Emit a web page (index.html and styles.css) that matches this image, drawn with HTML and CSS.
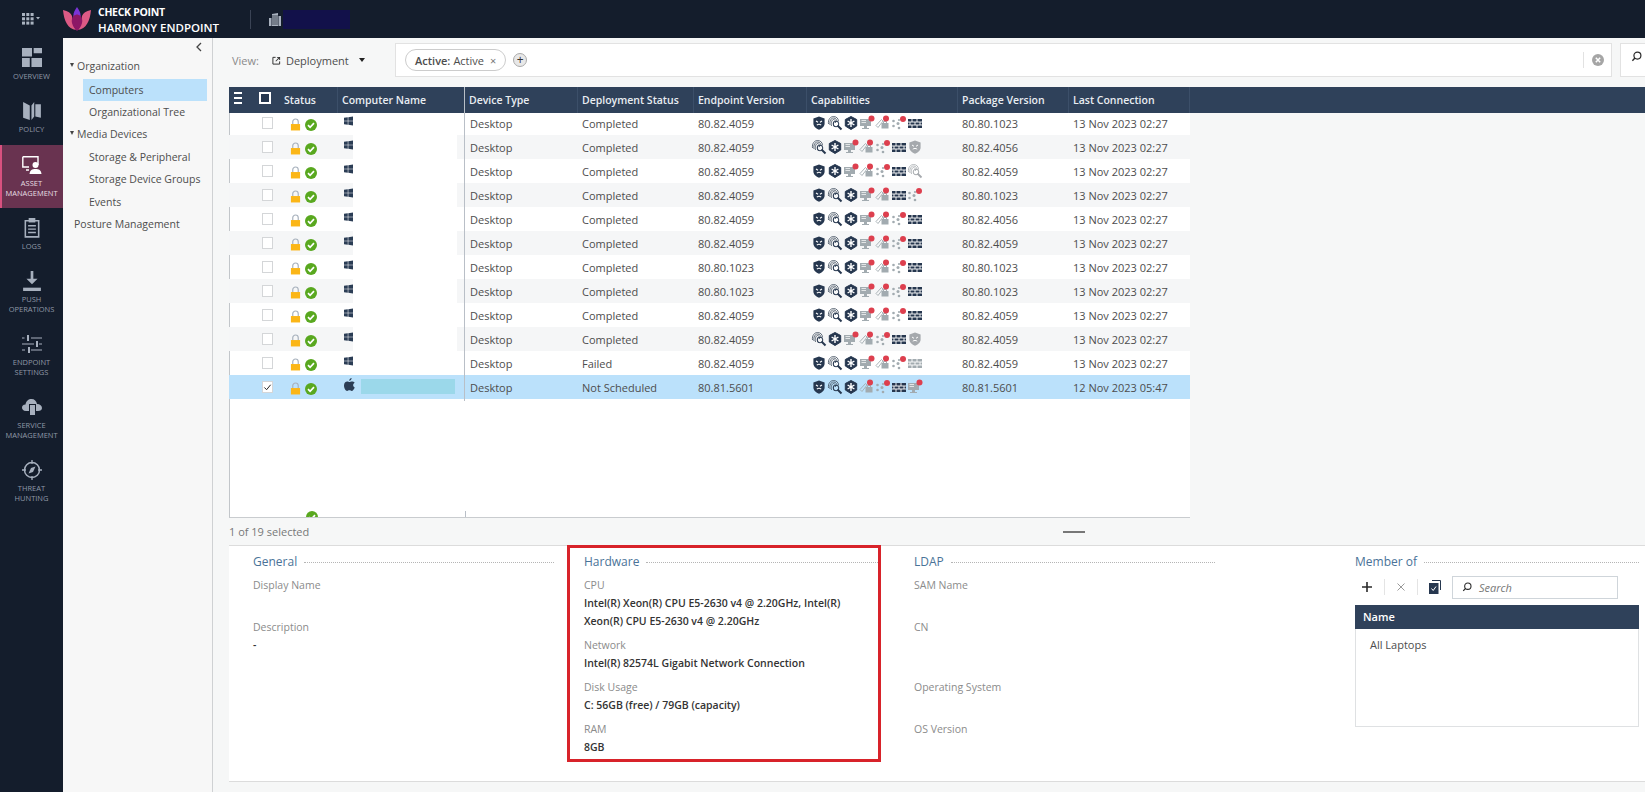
FILE: index.html
```html
<!DOCTYPE html>
<html lang="en">
<head>
    <meta charset="UTF-8">
    <title>Harmony Endpoint</title>
    <link rel="stylesheet" href="styles.css">
</head>
<body>
    <!-- shared icons -->
    <svg class="sprite" xmlns="http://www.w3.org/2000/svg">
        <symbol id="i-win" viewBox="0 0 10 10"><path d="M0 1.4 4.2.8v3.9H0zM4.8.7 10 0v4.7H4.8zM0 5.3h4.2v3.9L0 8.6zM4.8 5.3H10V10l-5.2-.7z"/></symbol>
        <symbol id="i-apple" viewBox="0 0 12 14"><path d="M8.3 0c.1 1.5-1.1 3-2.6 2.9C5.6 1.500 6.900.1 8.300 0zM11.700 10.200c-.7 1.700-2 3.800-3.300 3.800-1 0-1.300-.6-2.500-.6s-1.500.6-2.500.6C1.900 14 0 10.900 0 8c0-2.700 1.700-4.300 3.500-4.300 1.100 0 2 .7 2.500.7s1.600-.8 2.900-.7c.6 0 2 .2 2.700 1.400-2.300 1.500-2 4.200.1 5.100z"/></symbol>
        <symbol id="i-lock" viewBox="0 0 12 14"><path d="M3 7V4a3 3 0 0 1 6 0v3" fill="none" stroke="#a8b2bd" stroke-width="1.300"/><rect x="1" y="6.500" width="10" height="7" fill="#fbb617"/></symbol>
        <symbol id="i-ok" viewBox="0 0 12 12"><circle cx="6" cy="6" r="6" fill="#59a81f"/><path d="M3 6.200 5.100 8.300 9 4.200" fill="none" stroke="#fff" stroke-width="1.700"/></symbol>
        <symbol id="c-shield" viewBox="0 0 16 16"><path d="M8 1.500 13.600 3.500V8.500C13.600 11.500 11 13.500 8 14.700 5 13.500 2.400 11.500 2.400 8.500V3.500z" fill="#26374f"/><path d="M5 6 7 7.300M11 6 9 7.300M5.800 10.200C7 9.200 9 9.200 10.200 10.200" fill="none" stroke="#fff" stroke-width="1.100"/></symbol>
        <symbol id="c-shield-off" viewBox="0 0 16 16"><path d="M8 1.500 13.600 3.500V8.500C13.600 11.500 11 13.500 8 14.700 5 13.500 2.400 11.500 2.400 8.500V3.500z" fill="#a5a9ad"/><path d="M5 6 7 7.300M11 6 9 7.300M5.800 10.200C7 9.200 9 9.200 10.200 10.200" fill="none" stroke="#fff" stroke-width="1"/></symbol>
        <symbol id="c-print" viewBox="0 0 16 16"><g fill="none" stroke="#3e4b5c" stroke-width=".8"><path d="M1.500 9C.8 4.500 3.500 1.500 6.500 1.500S11.500 3.500 11.500 6.500"/><path d="M3 10C2.300 6 4 3 6.500 3S10 5 10 7"/><path d="M4.500 11C3.800 7.500 5 4.500 6.500 4.500S8.500 6 8.500 8"/><path d="M6.500 6.500C6.200 8.500 6.500 10.500 7.500 12"/></g><path d="M10.500 10.500 14.500 14.500" stroke="#26374f" stroke-width="2"/><circle cx="9" cy="9" r="2.800" fill="none" stroke="#26374f"/></symbol>
        <symbol id="c-print-off" viewBox="0 0 16 16"><g fill="none" stroke="#a5a9ad" stroke-width=".8"><path d="M1.500 9C.8 4.500 3.500 1.500 6.500 1.500S11.500 3.500 11.500 6.500"/><path d="M3 10C2.300 6 4 3 6.500 3S10 5 10 7"/><path d="M4.500 11C3.800 7.500 5 4.500 6.500 4.500S8.500 6 8.500 8"/></g><path d="M10.500 10.500 14.500 14.500" stroke="#a5a9ad" stroke-width="1.800"/><circle cx="9" cy="9" r="2.800" fill="none" stroke="#a5a9ad"/></symbol>
        <symbol id="c-hex" viewBox="0 0 16 16"><path d="M8 1.500 13.700 4.500V11L8 14.500 2.300 11V4.500z" fill="#26374f" stroke="#26374f" stroke-linejoin="round"/><path d="M8 4V12M4.600 6 11.400 10M11.400 6 4.600 10" stroke="#fff" stroke-width="1.400"/></symbol>
        <symbol id="c-screen" viewBox="0 0 16 16"><path d="M1 4H12V11H1zM5 11H8V13H10V14H3V13H5z" fill="#a2abb0"/><path d="M2.500 5.500H7M2.500 7.500H7" stroke="#fff" stroke-width=".7"/><circle cx="12.500" cy="3.500" r="3" fill="#dd3f4e"/></symbol>
        <symbol id="c-key" viewBox="0 0 16 16"><path d="M1 10.500 6.500 4.500 8 6 3 12.500z" fill="none" stroke="#a2abb0" stroke-width=".9"/><rect x="6.500" y="8" width="7" height="5.500" fill="#a2abb0"/><path d="M8.500 8V6.500h3V8" fill="none" stroke="#a2abb0"/><circle cx="11" cy="3.500" r="3" fill="#dd3f4e"/></symbol>
        <symbol id="c-nodes" viewBox="0 0 16 16"><g fill="#a2abb0"><circle cx="2.500" cy="6" r="1.300"/><circle cx="2.500" cy="11" r="1.300"/><circle cx="7" cy="8.500" r="1.500"/><circle cx="8" cy="13" r="1.300"/><circle cx="8" cy="5" r="1.100"/></g><circle cx="12" cy="4" r="3" fill="#dd3f4e"/></symbol>
        <symbol id="c-wall" viewBox="0 0 16 16"><path d="M1 4H15V13H1z" fill="#26374f"/><path d="M1 7H15M1 10H15M5 4V7M10 4V7M3 7V10M8 7V10M13 7V10M5 10V13M10 10V13" stroke="#fff" stroke-width=".9"/></symbol>
        <symbol id="c-wall-off" viewBox="0 0 16 16"><path d="M1 4H15V13H1z" fill="#a2abb0"/><path d="M1 7H15M1 10H15M5 4V7M10 4V7M3 7V10M8 7V10M13 7V10M5 10V13M10 10V13" stroke="#fff" stroke-width=".9"/></symbol>
    </svg>

    <!-- top bar -->
    <header class="topbar">
        <svg class="apps" viewBox="0 0 18 12"><g fill="#aab3c0"><rect width="3" height="3"/><rect x="4.300" width="3" height="3"/><rect x="8.600" width="3" height="3"/><rect y="4.300" width="3" height="3"/><rect x="4.300" y="4.300" width="3" height="3"/><rect x="8.600" y="4.300" width="3" height="3"/><rect y="8.600" width="3" height="3"/><rect x="4.300" y="8.600" width="3" height="3"/><rect x="8.600" y="8.600" width="3" height="3"/><path d="M14 4h4l-2 2.500z"/></g></svg>
        <svg class="logo" viewBox="0 0 28 24">
            <path d="M0 3C5 4 8 6 9 9 9 14 10 18 13 23 5 22 1 14 0 3z" fill="#dc5a85"/>
            <path d="M28 3C23 4 20 6 19 9 19 14 18 18 15 23 23 22 27 14 28 3z" fill="#dc5a85"/>
            <path d="M14 4C18 8 20 12 19 16 18 20 16 22 14 24 12 22 10 20 9 16 8 12 10 8 14 4z" fill="#8c1766"/>
            <path d="M14 0C16 3 18 6 17.500 9 16 8 15 7.500 14 7.500S12 8 10.500 9C10 6 12 3 14 0z" fill="#7b35d6"/>
        </svg>
        <div class="brand">
            <div class="brand-top">CHECK POINT</div>
            <div class="brand-name">HARMONY ENDPOINT</div>
        </div>
        <span class="top-divider"></span>
        <svg class="building" viewBox="0 0 12 13"><path d="M3 1 9 0V13H3zM0 5H2.500V13H0zM9.500 3H12V13H9.500z" fill="#a8b1be"/><path d="M3 3H9M3 5H9M3 7H9M3 9H9M3 11H9" stroke="#141d2c" stroke-width=".7"/></svg>
        <span class="tenant"></span>
    </header>

    <div class="layout">
        <!-- main navigation -->
        <nav class="sidenav">
            <a class="nav-item">
                <svg class="nav-icon" viewBox="0 0 18 18"><path d="M0 0H9V8H0zM10.500 0H18V5H10.500zM0 9.500H7V18H0zM8.500 9.500H18V18H8.500z" fill="#a7b0be" transform="scale(1 .95)"/></svg>
                <span>Overview</span>
            </a>
            <a class="nav-item">
                <svg class="nav-icon" viewBox="0 0 18 18"><path d="M1 1 7 4V17L1 15zM8.500 4 11 1V14L8.500 17zM12 3H17V15L12 14z" fill="#a7b0be"/></svg>
                <span>Policy</span>
            </a>
            <a class="nav-item active">
                <svg class="nav-icon" viewBox="0 0 20 18"><path d="M.8.800H16V9" fill="none" stroke="#fff" stroke-width="1.400"/><path d="M.8.800V11H7M4 14H7" fill="none" stroke="#fff" stroke-width="1.400"/><circle cx="13.500" cy="9" r="3" fill="#fff"/><path d="M7.500 18C8 14 10 13 13.500 13S19 14 19.500 18z" fill="#fff"/></svg>
                <span>Asset<br>Management</span>
            </a>
            <a class="nav-item">
                <svg class="nav-icon" viewBox="0 0 16 18"><path d="M2 2.500H14V17H2z" fill="none" stroke="#a7b0be" stroke-width="1.400"/><rect x="5" y="0" width="6" height="4" fill="#a7b0be"/><path d="M4.500 7H11.500M4.500 10H11.500M4.500 13H11.500" stroke="#a7b0be" stroke-width="1.300"/></svg>
                <span>Logs</span>
            </a>
            <a class="nav-item">
                <svg class="nav-icon" viewBox="0 0 18 18"><path d="M7.800 0H10.200V7H14L9 12 4 7H7.800z" fill="#a7b0be"/><path d="M1 15H17V18H1z" fill="#a7b0be"/></svg>
                <span>Push<br>Operations</span>
            </a>
            <a class="nav-item">
                <svg class="nav-icon" viewBox="0 0 20 18"><g stroke="#a7b0be" stroke-width="1.200"><path d="M0 3H2.500M9 3H20M0 9H12M17 9H20M0 15H3M9 15H20"/></g><g fill="#a7b0be"><rect x="5" y="0" width="2" height="6"/><rect x="14" y="6" width="2" height="6"/><rect x="6" y="12" width="2" height="6"/></g></svg>
                <span>Endpoint<br>Settings</span>
            </a>
            <a class="nav-item">
                <svg class="nav-icon" viewBox="0 0 20 18"><path d="M4 13C1 13 0 11 0 9.500S1 6.500 3.500 6.500C4 3 6.500 1 9.500 1S14.500 3 15 6C18 6 20 8 20 10S18.500 13 16 13z" fill="#a7b0be"/><rect x="7" y="6" width="7" height="12" fill="#141d2c"/><rect x="8" y="7" width="5" height="10" fill="#a7b0be"/></svg>
                <span>Service<br>Management</span>
            </a>
            <a class="nav-item">
                <svg class="nav-icon" viewBox="0 0 20 20"><circle cx="10" cy="10" r="7.500" fill="none" stroke="#a7b0be" stroke-width="1.500"/><path d="M10 0V4M10 16V20M0 10H4M16 10H20" stroke="#a7b0be" stroke-width="1.300"/><path d="M13.500 6.500 11 12 6.500 13.500 9 8z" fill="#a7b0be"/></svg>
                <span>Threat<br>Hunting</span>
            </a>
        </nav>

        <!-- tree panel -->
        <aside class="tree">
            <svg class="collapse" viewBox="0 0 6 10"><path d="M5 1 1 5 5 9" fill="none" stroke="#444" stroke-width="1.300"/></svg>
            <div class="tree-group"><i class="arrow"></i>Organization</div>
            <div class="tree-row selected">Computers</div>
            <div class="tree-row">Organizational Tree</div>
            <div class="tree-group"><i class="arrow"></i>Media Devices</div>
            <div class="tree-row">Storage &amp; Peripheral</div>
            <div class="tree-row">Storage Device Groups</div>
            <div class="tree-row">Events</div>
            <div class="tree-top">Posture Management</div>
        </aside>

        <main class="content">
            <div class="toolbar">
                <span class="view-label">View:</span>
                <svg class="view-icon" viewBox="0 0 10 10"><path d="M4 1.500H1V9H8.500V6" fill="none" stroke="#333" stroke-width="1.100"/><path d="M5.500 1H9V4.500H8V2.700L4.500 6.200 3.800 5.500 7.300 2H5.500z" fill="#333"/></svg>
                <span class="view-name">Deployment</span>
                <i class="caret"></i>
                <div class="filter-bar">
                    <span class="chip"><b>Active:</b> Active <em>×</em></span>
                    <span class="chip-add">+</span>
                    <span class="filter-clear">
                        <svg class="clear-icon" viewBox="0 0 12 12"><circle cx="6" cy="6" r="6" fill="#a5a5a5"/><path d="M3.800 3.800 8.200 8.200M8.200 3.800 3.800 8.200" stroke="#fff" stroke-width="1.500"/></svg>
                    </span>
                </div>
                <div class="search-btn">
                    <svg class="search-icon" viewBox="0 0 12 12"><circle cx="7" cy="5" r="3.800" fill="none" stroke="#2a2a2a" stroke-width="1.300"/><path d="M4.300 7.700 1.500 10.700" stroke="#2a2a2a" stroke-width="1.500"/></svg>
                </div>
            </div>

            <div class="grid">
                <div class="grid-head">
                    <div class="th th-tools">
                        <span class="menu-bars"><i></i><i></i><i></i></span>
                        <span class="head-check"></span>
                    </div>
                    <div class="th">Status</div>
                    <div class="th sep">Computer Name</div>
                    <div class="th sep-strong">Device Type</div>
                    <div class="th sep">Deployment Status</div>
                    <div class="th sep">Endpoint Version</div>
                    <div class="th sep">Capabilities</div>
                    <div class="th sep">Package Version</div>
                    <div class="th sep">Last Connection</div>
                    <div class="th sep"></div>
                </div>
                <div class="grid-body">
                    <div class="row">
                        <div class="td"><span class="check"></span></div>
                        <div class="td status"><svg class="lock"><use href="#i-lock"/></svg><svg class="ok"><use href="#i-ok"/></svg></div>
                        <div class="td name"><svg class="os"><use href="#i-win"/></svg><span class="redact"></span></div>
                        <div class="td device">Desktop</div>
                        <div class="td">Completed</div>
                        <div class="td">80.82.4059</div>
                        <div class="td caps"><svg><use href="#c-shield"/></svg><svg><use href="#c-print"/></svg><svg><use href="#c-hex"/></svg><svg><use href="#c-screen"/></svg><svg><use href="#c-key"/></svg><svg><use href="#c-nodes"/></svg><svg><use href="#c-wall"/></svg></div>
                        <div class="td">80.80.1023</div>
                        <div class="td">13 Nov 2023 02:27</div>
                    </div>
                    <div class="row">
                        <div class="td"><span class="check"></span></div>
                        <div class="td status"><svg class="lock"><use href="#i-lock"/></svg><svg class="ok"><use href="#i-ok"/></svg></div>
                        <div class="td name"><svg class="os"><use href="#i-win"/></svg><span class="redact"></span></div>
                        <div class="td device">Desktop</div>
                        <div class="td">Completed</div>
                        <div class="td">80.82.4059</div>
                        <div class="td caps"><svg><use href="#c-print"/></svg><svg><use href="#c-hex"/></svg><svg><use href="#c-screen"/></svg><svg><use href="#c-key"/></svg><svg><use href="#c-nodes"/></svg><svg><use href="#c-wall"/></svg><svg><use href="#c-shield-off"/></svg></div>
                        <div class="td">80.82.4056</div>
                        <div class="td">13 Nov 2023 02:27</div>
                    </div>
                    <div class="row">
                        <div class="td"><span class="check"></span></div>
                        <div class="td status"><svg class="lock"><use href="#i-lock"/></svg><svg class="ok"><use href="#i-ok"/></svg></div>
                        <div class="td name"><svg class="os"><use href="#i-win"/></svg><span class="redact"></span></div>
                        <div class="td device">Desktop</div>
                        <div class="td">Completed</div>
                        <div class="td">80.82.4059</div>
                        <div class="td caps"><svg><use href="#c-shield"/></svg><svg><use href="#c-hex"/></svg><svg><use href="#c-screen"/></svg><svg><use href="#c-key"/></svg><svg><use href="#c-nodes"/></svg><svg><use href="#c-wall"/></svg><svg><use href="#c-print-off"/></svg></div>
                        <div class="td">80.82.4059</div>
                        <div class="td">13 Nov 2023 02:27</div>
                    </div>
                    <div class="row">
                        <div class="td"><span class="check"></span></div>
                        <div class="td status"><svg class="lock"><use href="#i-lock"/></svg><svg class="ok"><use href="#i-ok"/></svg></div>
                        <div class="td name"><svg class="os"><use href="#i-win"/></svg><span class="redact"></span></div>
                        <div class="td device">Desktop</div>
                        <div class="td">Completed</div>
                        <div class="td">80.82.4059</div>
                        <div class="td caps"><svg><use href="#c-shield"/></svg><svg><use href="#c-print"/></svg><svg><use href="#c-hex"/></svg><svg><use href="#c-screen"/></svg><svg><use href="#c-key"/></svg><svg><use href="#c-wall"/></svg><svg><use href="#c-nodes"/></svg></div>
                        <div class="td">80.80.1023</div>
                        <div class="td">13 Nov 2023 02:27</div>
                    </div>
                    <div class="row">
                        <div class="td"><span class="check"></span></div>
                        <div class="td status"><svg class="lock"><use href="#i-lock"/></svg><svg class="ok"><use href="#i-ok"/></svg></div>
                        <div class="td name"><svg class="os"><use href="#i-win"/></svg><span class="redact"></span></div>
                        <div class="td device">Desktop</div>
                        <div class="td">Completed</div>
                        <div class="td">80.82.4059</div>
                        <div class="td caps"><svg><use href="#c-shield"/></svg><svg><use href="#c-print"/></svg><svg><use href="#c-hex"/></svg><svg><use href="#c-screen"/></svg><svg><use href="#c-key"/></svg><svg><use href="#c-nodes"/></svg><svg><use href="#c-wall"/></svg></div>
                        <div class="td">80.82.4056</div>
                        <div class="td">13 Nov 2023 02:27</div>
                    </div>
                    <div class="row">
                        <div class="td"><span class="check"></span></div>
                        <div class="td status"><svg class="lock"><use href="#i-lock"/></svg><svg class="ok"><use href="#i-ok"/></svg></div>
                        <div class="td name"><svg class="os"><use href="#i-win"/></svg><span class="redact"></span></div>
                        <div class="td device">Desktop</div>
                        <div class="td">Completed</div>
                        <div class="td">80.82.4059</div>
                        <div class="td caps"><svg><use href="#c-shield"/></svg><svg><use href="#c-print"/></svg><svg><use href="#c-hex"/></svg><svg><use href="#c-screen"/></svg><svg><use href="#c-key"/></svg><svg><use href="#c-nodes"/></svg><svg><use href="#c-wall"/></svg></div>
                        <div class="td">80.82.4059</div>
                        <div class="td">13 Nov 2023 02:27</div>
                    </div>
                    <div class="row">
                        <div class="td"><span class="check"></span></div>
                        <div class="td status"><svg class="lock"><use href="#i-lock"/></svg><svg class="ok"><use href="#i-ok"/></svg></div>
                        <div class="td name"><svg class="os"><use href="#i-win"/></svg><span class="redact"></span></div>
                        <div class="td device">Desktop</div>
                        <div class="td">Completed</div>
                        <div class="td">80.80.1023</div>
                        <div class="td caps"><svg><use href="#c-shield"/></svg><svg><use href="#c-print"/></svg><svg><use href="#c-hex"/></svg><svg><use href="#c-screen"/></svg><svg><use href="#c-key"/></svg><svg><use href="#c-nodes"/></svg><svg><use href="#c-wall"/></svg></div>
                        <div class="td">80.80.1023</div>
                        <div class="td">13 Nov 2023 02:27</div>
                    </div>
                    <div class="row">
                        <div class="td"><span class="check"></span></div>
                        <div class="td status"><svg class="lock"><use href="#i-lock"/></svg><svg class="ok"><use href="#i-ok"/></svg></div>
                        <div class="td name"><svg class="os"><use href="#i-win"/></svg><span class="redact"></span></div>
                        <div class="td device">Desktop</div>
                        <div class="td">Completed</div>
                        <div class="td">80.80.1023</div>
                        <div class="td caps"><svg><use href="#c-shield"/></svg><svg><use href="#c-print"/></svg><svg><use href="#c-hex"/></svg><svg><use href="#c-screen"/></svg><svg><use href="#c-key"/></svg><svg><use href="#c-nodes"/></svg><svg><use href="#c-wall"/></svg></div>
                        <div class="td">80.80.1023</div>
                        <div class="td">13 Nov 2023 02:27</div>
                    </div>
                    <div class="row">
                        <div class="td"><span class="check"></span></div>
                        <div class="td status"><svg class="lock"><use href="#i-lock"/></svg><svg class="ok"><use href="#i-ok"/></svg></div>
                        <div class="td name"><svg class="os"><use href="#i-win"/></svg><span class="redact"></span></div>
                        <div class="td device">Desktop</div>
                        <div class="td">Completed</div>
                        <div class="td">80.82.4059</div>
                        <div class="td caps"><svg><use href="#c-shield"/></svg><svg><use href="#c-print"/></svg><svg><use href="#c-hex"/></svg><svg><use href="#c-screen"/></svg><svg><use href="#c-key"/></svg><svg><use href="#c-nodes"/></svg><svg><use href="#c-wall"/></svg></div>
                        <div class="td">80.82.4059</div>
                        <div class="td">13 Nov 2023 02:27</div>
                    </div>
                    <div class="row">
                        <div class="td"><span class="check"></span></div>
                        <div class="td status"><svg class="lock"><use href="#i-lock"/></svg><svg class="ok"><use href="#i-ok"/></svg></div>
                        <div class="td name"><svg class="os"><use href="#i-win"/></svg><span class="redact"></span></div>
                        <div class="td device">Desktop</div>
                        <div class="td">Completed</div>
                        <div class="td">80.82.4059</div>
                        <div class="td caps"><svg><use href="#c-print"/></svg><svg><use href="#c-hex"/></svg><svg><use href="#c-screen"/></svg><svg><use href="#c-key"/></svg><svg><use href="#c-nodes"/></svg><svg><use href="#c-wall"/></svg><svg><use href="#c-shield-off"/></svg></div>
                        <div class="td">80.82.4059</div>
                        <div class="td">13 Nov 2023 02:27</div>
                    </div>
                    <div class="row">
                        <div class="td"><span class="check"></span></div>
                        <div class="td status"><svg class="lock"><use href="#i-lock"/></svg><svg class="ok"><use href="#i-ok"/></svg></div>
                        <div class="td name"><svg class="os"><use href="#i-win"/></svg><span class="redact"></span></div>
                        <div class="td device">Desktop</div>
                        <div class="td">Failed</div>
                        <div class="td">80.82.4059</div>
                        <div class="td caps"><svg><use href="#c-shield"/></svg><svg><use href="#c-print"/></svg><svg><use href="#c-hex"/></svg><svg><use href="#c-screen"/></svg><svg><use href="#c-key"/></svg><svg><use href="#c-nodes"/></svg><svg><use href="#c-wall-off"/></svg></div>
                        <div class="td">80.82.4059</div>
                        <div class="td">13 Nov 2023 02:27</div>
                    </div>
                    <div class="row picked">
                        <div class="td"><span class="check on">
                            <svg viewBox="0 0 10 10"><path d="M1.500 5.500 4 8 8.500 2.500" fill="none" stroke="#222" stroke-width="1.100"/></svg>
                        </span></div>
                        <div class="td status"><svg class="lock"><use href="#i-lock"/></svg><svg class="ok"><use href="#i-ok"/></svg></div>
                        <div class="td name"><svg class="os"><use href="#i-apple"/></svg><span class="redact"></span></div>
                        <div class="td device">Desktop</div>
                        <div class="td">Not Scheduled</div>
                        <div class="td">80.81.5601</div>
                        <div class="td caps"><svg><use href="#c-shield"/></svg><svg><use href="#c-print"/></svg><svg><use href="#c-hex"/></svg><svg><use href="#c-key"/></svg><svg><use href="#c-nodes"/></svg><svg><use href="#c-wall"/></svg><svg><use href="#c-screen"/></svg></div>
                        <div class="td">80.81.5601</div>
                        <div class="td">12 Nov 2023 05:47</div>
                    </div>
                    <div class="row-peek">
                        <svg class="ok"><use href="#i-ok"/></svg>
                        <span class="peek-line"></span>
                    </div>
                </div>
            </div>

            <div class="grid-foot">
                <span>1 of 19 selected</span>
                <i class="drag-handle"></i>
            </div>

            <!-- details of the selected computer -->
            <section class="details">
                <div class="col col-general">
                    <h3 class="col-title"><span>General</span></h3>
                    <div class="field"><label>Display Name</label><p></p></div>
                    <div class="field"><label>Description</label><p>-</p></div>
                </div>
                <div class="col col-hardware">
                    <h3 class="col-title"><span>Hardware</span></h3>
                    <div class="field"><label>CPU</label><p>Intel(R) Xeon(R) CPU E5-2630 v4 @ 2.20GHz, Intel(R)<br>Xeon(R) CPU E5-2630 v4 @ 2.20GHz</p></div>
                    <div class="field"><label>Network</label><p>Intel(R) 82574L Gigabit Network Connection</p></div>
                    <div class="field"><label>Disk Usage</label><p>C: 56GB (free) / 79GB (capacity)</p></div>
                    <div class="field"><label>RAM</label><p>8GB</p></div>
                </div>
                <div class="col col-ldap">
                    <h3 class="col-title"><span>LDAP</span></h3>
                    <div class="field"><label>SAM Name</label><p></p></div>
                    <div class="field"><label>CN</label><p class="tall"></p></div>
                    <div class="field"><label>Operating System</label><p></p></div>
                    <div class="field"><label>OS Version</label><p></p></div>
                </div>
                <div class="col col-member">
                    <h3 class="col-title"><span>Member of</span></h3>
                    <div class="member-tools">
                        <svg class="tool-add" viewBox="0 0 10 10"><path d="M5 0V10M0 5H10" stroke="#2a2a2a" stroke-width="1.600"/></svg>
                        <i class="tool-sep"></i>
                        <svg class="tool-del" viewBox="0 0 8 8"><path d="M.5.5 7.500 7.500M7.500.5 .5 7.500" stroke="#999" stroke-width="1"/></svg>
                        <i class="tool-sep"></i>
                        <svg class="tool-copy" viewBox="0 0 12 14"><path d="M3 .5H11.500V10" fill="none" stroke="#26374f"/><rect x="0" y="3" width="9.500" height="11" fill="#26374f"/><path d="M2.500 8.500 4.200 10.500 7 6.500" fill="none" stroke="#fff"/></svg>
                        <div class="member-search">
                            <svg viewBox="0 0 12 12"><circle cx="7" cy="5" r="3.800" fill="none" stroke="#2a2a2a" stroke-width="1.300"/><path d="M4.300 7.700 1.500 10.700" stroke="#2a2a2a" stroke-width="1.500"/></svg>
                            <span>Search</span>
                        </div>
                    </div>
                    <div class="member-table">
                        <div class="member-head">Name</div>
                        <div class="member-row">All Laptops</div>
                    </div>
                </div>
            </section>
        </main>
    </div>
</body>
</html>
```

FILE: styles.css
```css
* {
    box-sizing: border-box;
}

html, body {
    height: 100%;
}

body {
    margin: 0;
    overflow: hidden;
    font-family: "Open Sans", "Liberation Sans", sans-serif;
    font-size: 11px;
    color: #4d4d4d;
    background: #f6f7f7;
}

.sprite {
    display: none;
}

/* top bar */
.topbar {
    display: flex;
    align-items: center;
    height: 38px;
    background: #141d2c;
    color: #fff;
}

.apps {
    width: 18px;
    height: 12px;
    margin-left: 22px;
}

.logo {
    width: 28px;
    height: 24px;
    margin-left: 23px;
}

.brand {
    margin-left: 7px;
}

.brand-top {
    font-size: 10.5px;
    font-weight: 700;
    line-height: 16px;
    letter-spacing: -0.3px;
}

.brand-name {
    font-size: 11.5px;
    font-weight: 600;
    line-height: 15px;
}

.top-divider {
    width: 1px;
    height: 19px;
    margin-left: 31px;
    background: #3a4354;
}

.building {
    width: 12px;
    height: 13px;
    margin-left: 18px;
}

.tenant {
    width: 67px;
    height: 19px;
    margin-left: 2px;
    background: #12114a;
}

.layout {
    display: flex;
    height: 754px;
}

/* left navigation */
.sidenav {
    width: 63px;
    flex: none;
    background: #141d2c;
}

.nav-item {
    display: block;
    height: 53px;
    padding-top: 10px;
    text-align: center;
    color: #8f98a6;
    font-size: 7.5px;
    line-height: 9.5px;
    text-transform: uppercase;
}

.nav-item:nth-child(n+5) {
    height: 63px;
}

.nav-item.active {
    height: 63px;
    margin-top: 1px;
    background: #693350;
    border-left: 2px solid #d8517f;
    padding-right: 2px;
    color: #e6dde2;
}

.nav-icon {
    display: block;
    width: 20px;
    height: 20px;
    margin: 0 auto 4px;
}

/* tree */
.tree {
    width: 150px;
    flex: none;
    padding: 17px 5px 0 7px;
    position: relative;
    border-right: 1px solid #cfd1d3;
    background: #f7f7f7;
    font-size: 10.5px;
    line-height: 22px;
}

.collapse {
    position: absolute;
    top: 4px;
    right: 10px;
    width: 6px;
    height: 10px;
}

.tree-group {
    height: 22px;
    margin-bottom: 2px;
    padding-left: 7px;
    position: relative;
}

.arrow {
    position: absolute;
    left: 0;
    top: 8px;
    border-left: 2.5px solid transparent;
    border-right: 2.5px solid transparent;
    border-top: 4px solid #444;
}

.tree-row {
    width: 124px;
    height: 22px;
    margin-left: 13px;
    padding-left: 6px;
}

.tree-row.selected {
    background: #bbe1fb;
}

.tree-group + .tree-row + .tree-row + .tree-group + .tree-row {
    margin-top: -1px;
}

.tree-row:nth-of-type(n+7) {
    margin-top: 1px;
}

.tree-top {
    height: 22px;
    padding-left: 4px;
}

/* main column */
.content {
    flex: 1;
    min-width: 0;
    padding-top: 5px;
}

.toolbar {
    display: flex;
    align-items: center;
    height: 34px;
}

.view-label {
    margin-left: 19px;
    color: #8a8a8a;
}

.view-icon {
    width: 9px;
    height: 9px;
    margin-left: 13px;
}

.view-name {
    margin-left: 5px;
}

.caret {
    margin-left: 10px;
    border-left: 3.5px solid transparent;
    border-right: 3.5px solid transparent;
    border-top: 4px solid #222;
}

.filter-bar {
    display: flex;
    align-items: center;
    width: 1217px;
    height: 34px;
    margin-left: auto;
    padding-left: 9px;
    background: #fff;
    border: 1px solid #e2e2e2;
}

.chip {
    display: flex;
    align-items: center;
    gap: 3px;
    height: 22px;
    padding: 0 9px;
    border: 1px solid #ccc;
    border-radius: 11px;
}

.chip b {
    font-weight: 600;
}

.chip em {
    margin-left: 3px;
    font-style: normal;
    color: #777;
}

.chip-add {
    width: 14px;
    height: 14px;
    margin-left: 7px;
    border: 1px solid #aaa;
    border-radius: 50%;
    background: #e8e8e8;
    text-align: center;
    font-size: 12px;
    line-height: 11px;
    color: #333;
}

.filter-clear {
    display: flex;
    align-items: center;
    height: 16px;
    margin-left: auto;
    padding: 0 7px 0 8px;
    border-left: 1px solid #e2e2e2;
}

.clear-icon {
    width: 12px;
    height: 12px;
}

.search-btn {
    width: 25px;
    height: 34px;
    margin-left: 8px;
    padding: 7px 0 0 10px;
    background: #fff;
    border: 1px solid #e2e2e2;
    border-right: none;
}

.search-icon {
    width: 11px;
    height: 11px;
    display: block;
}

/* computers grid */
.grid {
    margin: 10px 0 0 16px;
}

.grid-head,
.row {
    display: grid;
    grid-template-columns: 51px 57px 127px 113px 116px 113px 151px 111px 121px;
}

.grid-head {
    grid-template-columns: 51px 57px 127px 113px 116px 113px 151px 111px 121px 1fr;
    height: 26px;
    background: #2f415a;
    color: #fff;
    position: relative;
    z-index: 1;
}

.th {
    padding-left: 4px;
    font-weight: 600;
    font-size: 10.5px;
    line-height: 26px;
    color: #e9edf2;
}

.th.sep {
    border-left: 1px solid #3c4f69;
}

.th.sep-strong {
    border-left: 1px solid #b9bfc7;
}

.th-tools {
    display: flex;
    align-items: flex-start;
    padding: 5px 0 0 5px;
}

.menu-bars {
    display: block;
    width: 8px;
}

.menu-bars i {
    display: block;
    height: 2px;
    margin-bottom: 3px;
    background: #fff;
}

.head-check {
    width: 12px;
    height: 12px;
    margin-left: 17px;
    background: #26374f;
    border: 2.5px solid #fff;
}

.grid-body {
    display: flex;
    flex-direction: column;
    width: 961px;
    height: 407px;
    margin-top: -2px;
    background: #fff;
    border-left: 1px solid #c2c6ca;
    border-bottom: 1px solid #c9cccf;
}

.row {
    height: 24px;
    margin-left: -1px;
}

.row:nth-child(even) {
    background: #f5f6f7;
}

.row.picked {
    background: #bbe1fb;
}

.td {
    padding-left: 5px;
    line-height: 26px;
    white-space: nowrap;
}

.td:first-child {
    padding-left: 33px;
}

.check {
    display: block;
    width: 11px;
    height: 12px;
    margin-top: 6px;
    background: #fff;
    border: 1px solid #d4d6d8;
}

.check.on svg {
    display: block;
    width: 9px;
    height: 10px;
}

.status {
    display: flex;
    padding-left: 10px;
    padding-top: 7px;
}

.lock {
    width: 11px;
    height: 13px;
}

.ok {
    width: 12px;
    height: 12px;
    margin: 1px 0 0 4px;
}

.name {
    display: flex;
    padding: 0 0 0 7px;
}

.os {
    width: 9px;
    height: 10px;
    margin-top: 5px;
    fill: #2b3d55;
    flex: none;
}

.picked .os {
    width: 11px;
    height: 13px;
    margin-top: 3px;
}

.redact {
    width: 104px;
    background: #fff;
}

.picked .redact {
    width: 94px;
    height: 15px;
    margin: 4px 0 0 6px;
    background: #9bd8ea;
}

.device {
    border-left: 1px solid #b9bfc7;
}

.caps {
    display: flex;
    padding: 4px 0 0 5px;
}

.caps svg {
    width: 16px;
    height: 16px;
    flex: none;
}

.row-peek {
    display: flex;
    height: 6px;
    margin-top: auto;
    overflow: hidden;
    padding-left: 76px;
}

.row-peek .ok {
    margin: 0;
}

.peek-line {
    width: 1px;
    margin-left: 147px;
    background: #b9bfc7;
}

.grid-foot {
    display: flex;
    align-items: center;
    height: 27px;
    margin-left: 16px;
    color: #777;
}

.drag-handle {
    width: 22px;
    height: 2px;
    margin-left: 754px;
    background: #777;
}

/* detail panel */
.details {
    display: grid;
    grid-template-columns: 338px 314px 474px 1fr;
    height: 237px;
    margin-left: 16px;
    background: #fff;
    border-top: 1px solid #dcdcdc;
    border-bottom: 1px solid #dcdcdc;
}

.col {
    padding-top: 7px;
    min-width: 0;
}

.col-general {
    padding-left: 24px;
    padding-right: 13px;
}

.col-hardware {
    height: 217px;
    margin-top: -1px;
    padding: 5px 0 0 14px;
    border: 3px solid #d8232a;
}

.col-ldap {
    padding-left: 33px;
    padding-right: 140px;
}

.col-member {
    padding-right: 6px;
}

.col-title {
    display: flex;
    align-items: center;
    margin: 0 0 5px;
    font-size: 12px;
    font-weight: 400;
    line-height: 18px;
    color: #4a7398;
}

.col-title::after {
    content: "";
    flex: 1;
    margin-left: 7px;
    border-top: 1px dotted #b5b5b5;
}

.field {
    margin-bottom: 6px;
}

.field label {
    display: block;
    line-height: 18px;
    color: #8b8b8b;
    font-size: 10.5px;
}

.field p {
    margin: 0;
    min-height: 18px;
    line-height: 18px;
    font-size: 10.5px;
    font-weight: 600;
    color: #333;
    white-space: nowrap;
}

.field p.tall {
    min-height: 36px;
}

/* member of */
.member-tools {
    display: flex;
    align-items: center;
    height: 22px;
    margin-top: 0;
}

.tool-add {
    width: 10px;
    height: 10px;
    margin-left: 7px;
}

.tool-sep {
    width: 1px;
    height: 16px;
    margin-left: 12px;
    background: #e4e4e4;
}

.tool-del {
    width: 8px;
    height: 8px;
    margin-left: 12px;
}

.tool-copy {
    width: 12px;
    height: 14px;
    margin-left: 11px;
}

.member-search {
    display: flex;
    align-items: center;
    width: 166px;
    height: 23px;
    margin-left: 11px;
    padding-left: 9px;
    border: 1px solid #cfd5da;
    color: #777;
    font-style: italic;
}

.member-search svg {
    width: 10px;
    height: 10px;
    margin-right: 7px;
}

.member-table {
    height: 122px;
    margin-top: 7px;
    border: 1px solid #dfe1e3;
    border-top: none;
}

.member-head {
    height: 24px;
    margin: 0 -1px;
    padding-left: 8px;
    background: #2f415a;
    color: #fff;
    font-weight: 600;
    line-height: 24px;
}

.member-row {
    padding: 7px 0 0 14px;
    line-height: 18px;
}
```
